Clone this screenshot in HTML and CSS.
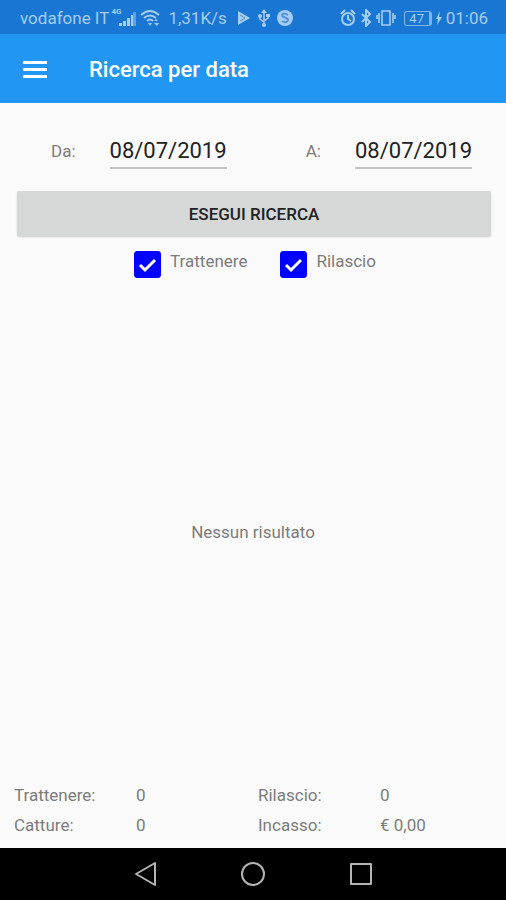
FILE: index.html
```html
<!DOCTYPE html>
<html lang="it">
<head>
    <meta charset="UTF-8">
    <meta name="viewport" content="width=device-width, initial-scale=1.0">
    <title>Ricerca per data</title>
    <link rel="stylesheet" href="styles.css">
</head>
<body>
    <!-- Barra di stato -->
    <div class="status-bar">
        <div class="status-group">
            <span>vodafone IT</span>
            <span class="signal">
                <span class="network">4G</span>
                <svg width="17" height="14" viewBox="0 0 17 14">
                    <path d="M0 11h3v3H0zM4 9h3v5H4zM8 6h3v8H8z"/>
                    <path d="M12 3h2v11h-2z"/>
                    <path d="M14 0h3v14h-3z" opacity=".5"/>
                </svg>
            </span>
            <svg class="wifi" width="20" height="18" viewBox="0 0 20 18">
                <path d="M1 6q9-8 18 0M4 9q6-5 12 0M7 12q3-3 6 0" fill="none" stroke="currentColor" stroke-width="2"/>
                <path d="M8 14h4l-2 3zM14 12l2-2 2 2zM14 14h5l-2 3z"/>
            </svg>
            <span class="speed">1,31K/s</span>
            <svg class="play" width="14" height="16" viewBox="0 0 14 16">
                <path d="M1 1l12 7-12 7z"/>
                <path d="M3 11l5-3-5-3" fill="none" stroke="#4d93da"/>
            </svg>
            <svg class="usb" width="14" height="18" viewBox="0 0 14 18">
                <path d="M7 3v12M7 13L3 10V6M7 12l4-3V6" fill="none" stroke="currentColor" stroke-width="1.5"/>
                <path d="M7 0l3 4H4zM9 5h4v3H9z"/>
                <circle cx="3" cy="7" r="2"/>
                <circle cx="7" cy="16" r="2"/>
            </svg>
            <svg class="app" width="16" height="16" viewBox="0 0 16 16">
                <circle cx="8" cy="8" r="8"/>
                <path d="M11 5q-5-3-6 0c0 3 6 2 6 5q-1 4-6 1" fill="none" stroke="#4d93da" stroke-width="2"/>
            </svg>
        </div>
        <div class="status-group">
            <svg width="16" height="18" viewBox="0 0 16 18">
                <circle cx="8" cy="10" r="6" fill="none" stroke="currentColor" stroke-width="2"/>
                <path d="M8 6v4l3 2M1 5l4-4M15 5l-4-4" fill="none" stroke="currentColor" stroke-width="2"/>
            </svg>
            <svg class="bluetooth" width="12" height="18" viewBox="0 0 12 18">
                <path d="M2 5l8 8-4 4V1l4 4-8 8" fill="none" stroke="currentColor" stroke-width="2"/>
            </svg>
            <svg class="vibrate" width="20" height="18" viewBox="0 0 20 18">
                <path d="M6 2h8v14H6zM3 4v10M17 4v10M1 6v4M19 6v4" fill="none" stroke="currentColor" stroke-width="1.6"/>
            </svg>
            <span class="battery">47</span>
            <svg class="bolt" width="6" height="14" viewBox="0 0 6 14">
                <path d="M4 0L0 8h2l-1 6 5-8H3z"/>
            </svg>
            <span>01:06</span>
        </div>
    </div>

    <header class="app-bar">
        <button class="menu-button" type="button" aria-label="Menu">
            <svg width="24" height="18" viewBox="0 0 24 18">
                <path d="M0 0h24v3H0zM0 7h24v3H0zM0 14h24v3H0z"/>
            </svg>
        </button>
        <h1>Ricerca per data</h1>
    </header>

    <main>
        <form class="search-form">
            <div class="dates">
                <div class="field">
                    <label for="from">Da:</label>
                    <input type="text" id="from" name="from" value="08/07/2019">
                </div>
                <div class="field">
                    <label for="to">A:</label>
                    <input type="text" id="to" name="to" value="08/07/2019">
                </div>
            </div>

            <button class="search-button" type="button">ESEGUI RICERCA</button>

            <div class="filters">
                <div class="check">
                    <input type="checkbox" id="keep" name="keep" checked>
                    <label for="keep">Trattenere</label>
                </div>
                <div class="check">
                    <input type="checkbox" id="release" name="release" checked>
                    <label for="release">Rilascio</label>
                </div>
            </div>
        </form>

        <p class="empty">Nessun risultato</p>

        <!-- Totali -->
        <dl class="totals">
            <dt>Trattenere:</dt>
            <dd>0</dd>
            <dt>Rilascio:</dt>
            <dd>0</dd>
            <dt>Catture:</dt>
            <dd>0</dd>
            <dt>Incasso:</dt>
            <dd>€ 0,00</dd>
        </dl>
    </main>

    <!-- Barra di navigazione -->
    <nav class="nav-bar">
        <button type="button" aria-label="Indietro">
            <svg width="26" height="26" viewBox="0 0 26 26">
                <path d="M23 2v22L4 13z"/>
            </svg>
        </button>
        <button type="button" aria-label="Home">
            <svg width="26" height="26" viewBox="0 0 26 26">
                <circle cx="13" cy="13" r="11"/>
            </svg>
        </button>
        <button type="button" aria-label="Recenti">
            <svg width="26" height="26" viewBox="0 0 26 26">
                <path d="M3 3h20v20H3z"/>
            </svg>
        </button>
    </nav>
</body>
</html>
```

FILE: styles.css
```css
* {
    box-sizing: border-box;
}
body {
    display: flex;
    flex-direction: column;
    min-height: 100vh;
    margin: 0;
    font-family: Roboto, sans-serif;
    font-size: 17px;
    line-height: 20px;
    color: #7c7c7c;
    background-color: #fafafa;
}
button, input {
    font-family: inherit;
    border: 0;
    border-radius: 0;
    padding: 0;
    margin: 0;
}
svg {
    display: block;
    flex: none;
    fill: currentColor;
}
.status-bar {
    display: flex;
    justify-content: space-between;
    align-items: center;
    height: 34px;
    padding: 2px 18px 0 20px;
    color: #a6cdf2;
    background-color: #1976d2;
    white-space: nowrap;
}
.status-group {
    display: flex;
    align-items: center;
}
.signal {
    position: relative;
    padding: 2px 0 0 9px;
    margin-left: 1px;
}
.network {
    position: absolute;
    top: -2px;
    left: 1px;
    font-size: 8px;
    font-weight: 700;
    line-height: 8px;
}
.wifi {
    margin-left: 4px;
}
.speed {
    margin-left: 8px;
}
.play {
    margin-left: 10px;
}
.usb {
    margin-left: 6px;
}
.app {
    margin-left: 6px;
}
.bluetooth {
    margin-left: 4px;
}
.vibrate {
    margin-left: 4px;
}
.battery {
    width: 28px;
    margin-left: 8px;
    border: 1px solid #80b5e8;
    border-right-width: 3px;
    border-radius: 3px;
    font-size: 13px;
    line-height: 13px;
    text-align: center;
}
.bolt {
    margin: 0 4px;
}
.app-bar {
    display: flex;
    align-items: center;
    gap: 42px;
    height: 69px;
    padding: 2px 23px 0;
    color: #fff;
    background-color: #2196f3;
}
.app-bar h1 {
    margin: 0;
    font-size: 22px;
    font-weight: 500;
    line-height: 28px;
}
.menu-button {
    color: inherit;
    background: none;
}
main {
    flex: 1;
    display: flex;
    flex-direction: column;
}
.search-form {
    padding: 32px 15px 0 17px;
}
.dates {
    display: flex;
    justify-content: space-between;
    padding: 0 19px 0 34px;
}
.field {
    display: flex;
    align-items: center;
    gap: 34px;
}
.field input {
    width: 117px;
    height: 34px;
    padding-bottom: 2px;
    border-bottom: 2px solid #c4c4c4;
    font-size: 22px;
    color: #222;
    background: none;
}
.field label {
    padding-bottom: 2px;
}
.search-button {
    display: block;
    width: 100%;
    height: 45px;
    margin-top: 22px;
    border-radius: 2px;
    font-size: 17px;
    font-weight: 500;
    color: #222;
    background-color: #d6d7d7;
    box-shadow: 0 1px 2px #ccc;
}
.filters {
    display: flex;
    justify-content: center;
    gap: 33px;
    margin-top: 15px;
    padding-left: 2px;
}
.check {
    display: flex;
    gap: 9px;
}
.check input {
    appearance: none;
    width: 27px;
    height: 27px;
    border-radius: 3px;
    border: 1px solid #00f;
}
.check input:checked {
    background: #00f url("data:image/svg+xml,%3Csvg xmlns='http://www.w3.org/2000/svg' viewBox='0 0 27 27'%3E%3Cpath d='M6 14l5 5L21 9' fill='none' stroke='white' stroke-width='3'/%3E%3C/svg%3E") center / 27px;
}
.empty {
    flex: 1;
    display: flex;
    align-items: center;
    justify-content: center;
    margin: 0;
}
.totals {
    display: grid;
    grid-template-columns: repeat(4, 1fr);
    row-gap: 10px;
    margin: 0;
    padding: 0 4px 13px 14px;
}
.totals dd {
    margin: 0;
}
.nav-bar {
    display: flex;
    justify-content: center;
    align-items: center;
    gap: 82px;
    height: 52px;
    background-color: #000;
}
.nav-bar button {
    background: none;
}
.nav-bar svg {
    fill: none;
    stroke: #b4b4b4;
    stroke-width: 2;
    stroke-linejoin: round;
}
```
